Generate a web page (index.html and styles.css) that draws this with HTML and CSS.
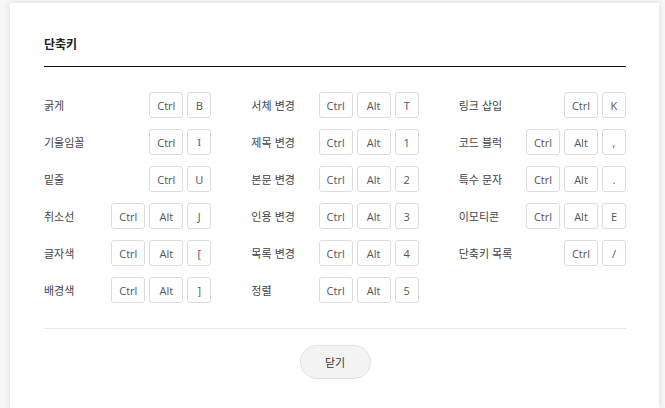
FILE: index.html
```html
<!DOCTYPE html>
<html lang="ko">
<head>
<meta charset="utf-8">
<title>단축키</title>
<link rel="stylesheet" href="styles.css">
</head>
<body>
<div class="modal">
  <div class="modal-header">
    <h2 class="modal-title">단축키</h2>
  </div>
  <div class="shortcut-grid">
    <div class="row"><span class="label">굵게</span><span class="keys"><kbd class="key">Ctrl</kbd><kbd class="key single">B</kbd></span></div>
    <div class="row"><span class="label">서체 변경</span><span class="keys"><kbd class="key">Ctrl</kbd><kbd class="key">Alt</kbd><kbd class="key single">T</kbd></span></div>
    <div class="row"><span class="label">링크 삽입</span><span class="keys"><kbd class="key">Ctrl</kbd><kbd class="key single">K</kbd></span></div>

    <div class="row"><span class="label">기울임꼴</span><span class="keys"><kbd class="key">Ctrl</kbd><kbd class="key single serif">I</kbd></span></div>
    <div class="row"><span class="label">제목 변경</span><span class="keys"><kbd class="key">Ctrl</kbd><kbd class="key">Alt</kbd><kbd class="key single">1</kbd></span></div>
    <div class="row"><span class="label">코드 블럭</span><span class="keys"><kbd class="key">Ctrl</kbd><kbd class="key">Alt</kbd><kbd class="key single">,</kbd></span></div>

    <div class="row"><span class="label">밑줄</span><span class="keys"><kbd class="key">Ctrl</kbd><kbd class="key single">U</kbd></span></div>
    <div class="row"><span class="label">본문 변경</span><span class="keys"><kbd class="key">Ctrl</kbd><kbd class="key">Alt</kbd><kbd class="key single">2</kbd></span></div>
    <div class="row"><span class="label">특수 문자</span><span class="keys"><kbd class="key">Ctrl</kbd><kbd class="key">Alt</kbd><kbd class="key single">.</kbd></span></div>

    <div class="row"><span class="label">취소선</span><span class="keys"><kbd class="key">Ctrl</kbd><kbd class="key">Alt</kbd><kbd class="key single">J</kbd></span></div>
    <div class="row"><span class="label">인용 변경</span><span class="keys"><kbd class="key">Ctrl</kbd><kbd class="key">Alt</kbd><kbd class="key single">3</kbd></span></div>
    <div class="row"><span class="label">이모티콘</span><span class="keys"><kbd class="key">Ctrl</kbd><kbd class="key">Alt</kbd><kbd class="key single">E</kbd></span></div>

    <div class="row"><span class="label">글자색</span><span class="keys"><kbd class="key">Ctrl</kbd><kbd class="key">Alt</kbd><kbd class="key single">[</kbd></span></div>
    <div class="row"><span class="label">목록 변경</span><span class="keys"><kbd class="key">Ctrl</kbd><kbd class="key">Alt</kbd><kbd class="key single">4</kbd></span></div>
    <div class="row"><span class="label">단축키 목록</span><span class="keys"><kbd class="key">Ctrl</kbd><kbd class="key single">/</kbd></span></div>

    <div class="row"><span class="label">배경색</span><span class="keys"><kbd class="key">Ctrl</kbd><kbd class="key">Alt</kbd><kbd class="key single">]</kbd></span></div>
    <div class="row"><span class="label">정렬</span><span class="keys"><kbd class="key">Ctrl</kbd><kbd class="key">Alt</kbd><kbd class="key single">5</kbd></span></div>
    <div class="row empty"></div>
  </div>
  <div class="modal-footer">
    <button class="close-btn" type="button">닫기</button>
  </div>
</div>
</body>
</html>
```

FILE: styles.css
```css
html, body {
  margin: 0;
  padding: 0;
  height: 408px;
  background: #f7f7f7;
  overflow: hidden;
}

body {
  font-family: "Noto Sans CJK KR", "Noto Sans", "Liberation Sans", sans-serif;
  color: #333;
}

.modal {
  box-sizing: border-box;
  width: 649px;
  height: 405px;
  margin: 3px 0 0 10px;
  padding: 31px 33px 0 34px;
  background: #fff;
  box-shadow: 0 0 7px rgba(0, 0, 0, 0.13);
  overflow: hidden;
}

.modal-header {
  padding-bottom: 12px;
  border-bottom: 1px solid #111;
}

.modal-title {
  margin: 0;
  font-size: 12px;
  line-height: 20px;
  font-weight: 600;
  color: #222;
}

.shortcut-grid {
  display: grid;
  grid-template-columns: repeat(3, 1fr);
  column-gap: 40px;
  row-gap: 11px;
  margin-top: 25px;
}

.row {
  display: flex;
  align-items: center;
  justify-content: space-between;
  height: 26px;
}

.label {
  font-size: 11px;
  color: #444;
  white-space: nowrap;
}

.keys {
  display: flex;
  gap: 4px;
}

.key {
  box-sizing: border-box;
  display: flex;
  align-items: center;
  justify-content: center;
  width: 34px;
  height: 26px;
  border: 1px solid #dcdcdc;
  border-radius: 3px;
  background: #fff;
  font-family: "Open Sans", "Noto Sans", sans-serif;
  font-size: 11px;
  color: #555;
}

.key.single {
  width: 24px;
}

.key.serif {
  font-family: "DejaVu Serif", "Liberation Serif", serif;
  font-size: 10px;
}

.modal-footer {
  margin-top: 25px;
  border-top: 1px solid #e8e8e8;
  padding-top: 16px;
  display: flex;
  justify-content: center;
}

.close-btn {
  width: 71px;
  height: 34px;
  border: 1px solid #e0e0e0;
  border-radius: 17px;
  background: #f3f3f3;
  font-family: "Noto Sans CJK KR", sans-serif;
  font-size: 11px;
  color: #333;
  padding: 0;
  cursor: pointer;
}
```
